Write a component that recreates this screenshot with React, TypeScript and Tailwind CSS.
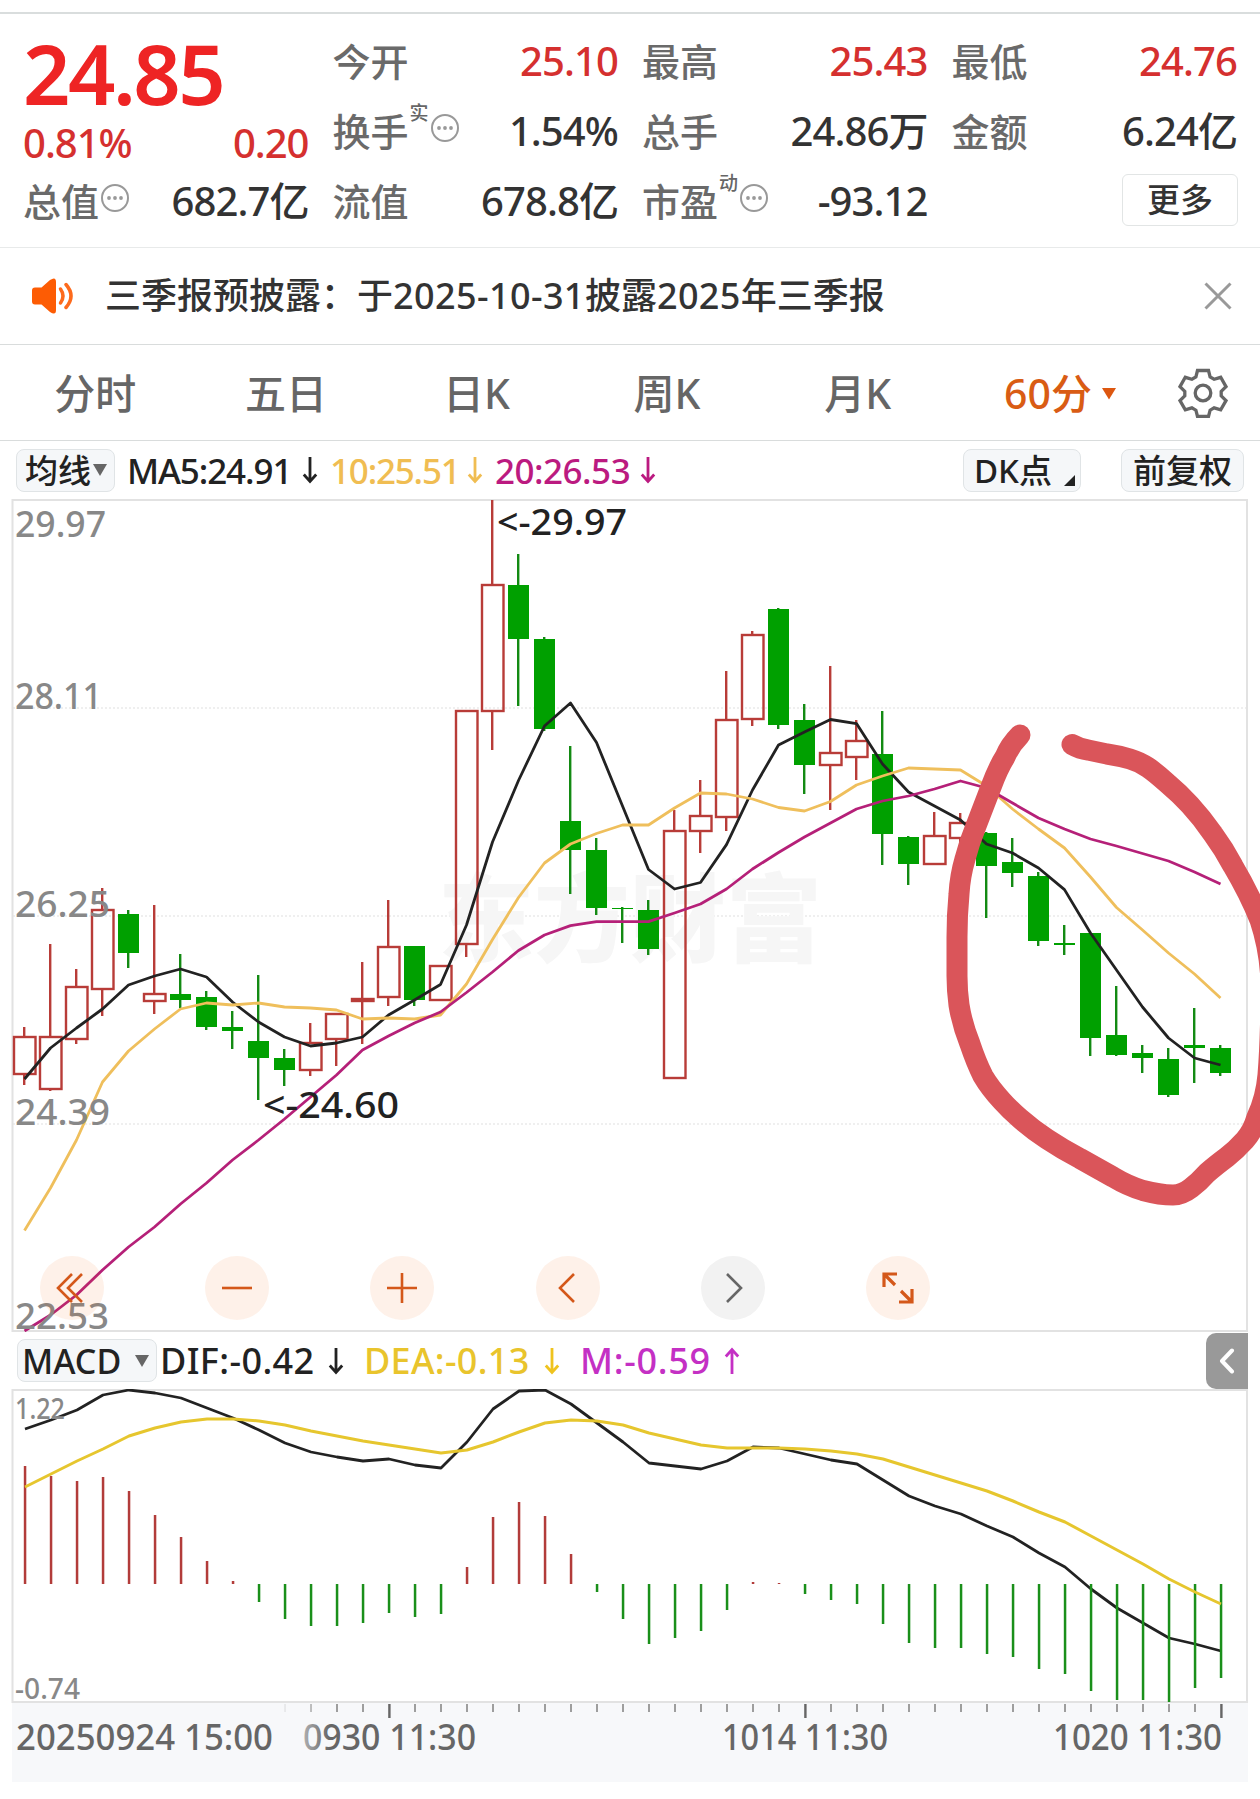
import type { ReactNode } from 'react';
import { clsx } from 'clsx';

const STEP = 26;

type Candle = ['r' | 'g', number, number, number, number];

// [colour, high, body top, body bottom, low]
const CANDLES: Candle[] = [
  ['r', 1027, 1037, 1074, 1085],
  ['r', 944, 1037, 1089, 1091],
  ['r', 969, 987, 1039, 1044],
  ['r', 888, 910, 989, 1016],
  ['g', 910, 914, 953, 968],
  ['r', 905, 994, 1001, 1014],
  ['g', 954, 994, 1000, 1008],
  ['g', 991, 997, 1027, 1030],
  ['g', 1011, 1027, 1031, 1049],
  ['g', 975, 1041, 1058, 1100],
  ['g', 1049, 1058, 1070, 1086],
  ['r', 1023, 1043, 1070, 1076],
  ['r', 1014, 1014, 1039, 1066],
  ['r', 962, 999, 1001, 1044],
  ['r', 900, 947, 997, 1006],
  ['g', 946, 946, 1000, 1006],
  ['r', 966, 966, 1000, 1000],
  ['r', 711, 711, 944, 957],
  ['r', 500, 585, 711, 750],
  ['g', 554, 585, 639, 706],
  ['g', 637, 639, 729, 731],
  ['g', 746, 821, 850, 894],
  ['g', 838, 850, 908, 915],
  ['g', 907, 908, 909, 943],
  ['g', 900, 910, 949, 955],
  ['r', 810, 831, 1078, 1078],
  ['r', 780, 816, 831, 853],
  ['r', 671, 720, 817, 831],
  ['r', 631, 635, 719, 726],
  ['g', 608, 609, 725, 729],
  ['g', 704, 720, 765, 794],
  ['r', 666, 753, 765, 810],
  ['r', 720, 741, 757, 780],
  ['g', 711, 754, 834, 865],
  ['g', 836, 837, 864, 885],
  ['r', 812, 836, 864, 864],
  ['r', 813, 823, 838, 845],
  ['g', 832, 833, 866, 918],
  ['g', 838, 862, 873, 887],
  ['g', 872, 876, 941, 946],
  ['g', 925, 943, 945, 955],
  ['g', 933, 933, 1038, 1056],
  ['g', 986, 1035, 1055, 1056],
  ['g', 1045, 1053, 1058, 1073],
  ['g', 1048, 1059, 1095, 1097],
  ['g', 1008, 1045, 1048, 1083],
  ['g', 1045, 1048, 1073, 1076],
];

const MA5 = [
  1079, 1048, 1028, 1009, 985, 976, 969, 977, 1002, 1022, 1037, 1046, 1043, 1037, 1015, 1000, 984.5, 925, 842, 780.5,
  726, 703, 742.5, 806, 869.5, 889, 882.5, 844.6, 790, 745, 732, 719.5, 723.6, 764, 792, 806, 820, 844, 853, 868, 889.6,
  933, 970, 1007, 1038, 1058, 1065,
];
const MA10 = [
  1230.6, 1188, 1140, 1082, 1051, 1029, 1009, 1003, 1005, 1003, 1007, 1008, 1010, 1019, 1018, 1019, 1015, 984, 939.5,
  897.5, 863, 844, 833.5, 825, 825, 808, 793, 794, 799, 807.5, 811, 801.5, 785, 776, 768, 769, 770, 786, 809, 829, 848,
  877, 907.5, 930, 953, 974, 998,
];
const MA20 = [
  1331, 1315, 1295, 1270, 1247, 1227, 1204, 1183, 1160, 1140, 1119, 1097, 1075, 1050, 1036, 1023, 1012, 992.5, 972,
  950.5, 935, 925.6, 921.7, 921.7, 921.7, 913, 904, 889, 869, 852.5, 837, 823, 809, 801, 796, 789, 781, 788, 803, 818,
  829, 839, 846, 853.5, 861, 872, 884,
];
const DIF = [
  1429, 1420, 1410, 1395, 1390, 1393, 1398, 1408, 1418, 1430, 1443, 1452, 1457, 1461, 1459, 1465, 1468, 1442, 1409,
  1391, 1390, 1404, 1423, 1442, 1463, 1466, 1469, 1461, 1447, 1448, 1454, 1460, 1464, 1480, 1496, 1506, 1514, 1526,
  1537, 1553, 1567, 1589, 1608, 1623, 1638, 1644, 1651,
];
const DEA = [
  1487, 1474, 1461, 1449, 1436, 1428, 1422, 1419, 1419, 1421, 1425, 1431, 1436, 1441, 1445, 1449, 1453, 1450, 1442,
  1432, 1423, 1420, 1421, 1425, 1433, 1439, 1445, 1448, 1448, 1448, 1449, 1451, 1454, 1459, 1467, 1475, 1483, 1491,
  1501, 1512, 1522, 1536, 1550, 1564, 1579, 1592, 1604,
];
const MACD = [
  1466, 1476, 1481, 1477, 1491, 1515, 1537, 1561, 1581, 1602, 1619, 1626, 1626, 1623, 1613, 1617, 1614, 1567, 1517,
  1502, 1516, 1554, 1592, 1619, 1644, 1638, 1631, 1610, 1582, 1583, 1594, 1600, 1604, 1624, 1643, 1648, 1648, 1654,
  1657, 1669, 1674, 1691, 1700, 1700, 1702, 1688, 1678,
];
const ZERO = 1584;

function toPoints(values: number[], start: number) {
  return values.map((y, i) => `${start + i * STEP},${y}`).join(' ');
}

function Label({
  x,
  y,
  w,
  size,
  fill,
  children,
}: {
  x: number;
  y: number;
  w: number;
  size: number;
  fill: string;
  children: string;
}) {
  return (
    <text x={x} y={y} fontSize={size} fill={fill} textLength={w} lengthAdjust="spacingAndGlyphs">
      {children}
    </text>
  );
}

function InfoIcon() {
  return (
    <svg width="30" height="30" viewBox="0 0 30 30" className="relative -top-[3px] left-px shrink-0">
      <circle cx="15" cy="15" r="13" fill="none" stroke="#999" strokeWidth="2" />
      <circle cx="9" cy="15" r="1.9" fill="#999" />
      <circle cx="15" cy="15" r="1.9" fill="#999" />
      <circle cx="21" cy="15" r="1.9" fill="#999" />
    </svg>
  );
}

function Stat({
  label,
  value,
  red,
  sup,
  info,
}: {
  label: string;
  value: string;
  red?: boolean;
  sup?: string;
  info?: boolean;
}) {
  return (
    <div className="flex h-[70px] items-center">
      <span className="text-[38px] text-[#6a6a6a]">{label}</span>
      {sup && <span className="relative -top-[18px] ml-px text-[19px] text-[#666]">{sup}</span>}
      {info && <InfoIcon />}
      <span className={clsx('ml-auto text-[40px] tracking-[-0.9px]', red ? 'text-[#d5302f]' : 'text-[#333]')}>
        {value}
      </span>
    </div>
  );
}

function Quote() {
  return (
    <section className="mt-3 h-[235px] border-t-2 border-[#d9dddd] px-[23px] pt-3">
      <div className="grid grid-cols-4 gap-x-6">
        <div>
          <div className="flex h-[90px] items-center pt-[3px] text-[83px] font-semibold tracking-[-2.5px] text-[#ee2424]">
            24.85
          </div>
          <div className="flex h-[50px] items-center justify-between pt-1 text-[40px] tracking-[-1px] text-[#d5302f]">
            <span>0.81%</span>
            <span>0.20</span>
          </div>
          <Stat label="总值" value="682.7亿" info />
        </div>
        <div>
          <Stat label="今开" value="25.10" red />
          <Stat label="换手" value="1.54%" sup="实" info />
          <Stat label="流值" value="678.8亿" />
        </div>
        <div>
          <Stat label="最高" value="25.43" red />
          <Stat label="总手" value="24.86万" />
          <Stat label="市盈" value="-93.12" sup="动" info />
        </div>
        <div>
          <Stat label="最低" value="24.76" red />
          <Stat label="金额" value="6.24亿" />
          <div className="flex h-[70px] items-center justify-end">
            <button className="relative -top-px -mr-px h-[52px] w-[116px] rounded-md border-[1.5px] border-[#e2e5e5] pb-[2px] text-[33px] leading-none text-[#333]">
              更多
            </button>
          </div>
        </div>
      </div>
    </section>
  );
}

function Notice() {
  return (
    <section className="flex h-[97px] items-center border-t border-[#e8eaea] px-[31px]">
      <svg width="42" height="36" viewBox="0 0 42 36">
        <path
          d="M4 9.500h6.500L19 2q6-4 6 2v28q0 6-6 2l-8.500-7.500H4q-3 0-3-3v-11q0-3 3-3z"
          fill="#fd5c04"
        />
        <path d="M29.500 11q5 7 0 14" fill="none" stroke="#fd6a1c" strokeWidth="3.500" strokeLinecap="round" />
        <path d="M35 6.500q10 11.500 0 23" fill="none" stroke="#fd6a1c" strokeWidth="3.500" strokeLinecap="round" />
      </svg>
      <span className="ml-8 text-[36px] text-[#333]">
        三季报预披露：于
        <span className="tracking-[0.4px]">2025-10-31</span>
        披露
        <span className="tracking-[0.4px]">2025</span>
        年三季报
      </span>
      <svg width="28" height="28" viewBox="0 0 28 28" className="-mr-[3px] ml-auto">
        <path d="M1.500 1.500l25 25M26.500 1.500l-25 25" stroke="#999" strokeWidth="3" />
      </svg>
    </section>
  );
}

const TABS = ['分时', '五日', '日K', '周K', '月K'];

function Tabs() {
  return (
    <nav className="flex h-[97px] items-center border-y-[1.5px] border-[#d9dcdc] text-[41px] text-[#666]">
      {TABS.map((tab) => (
        <span key={tab} className="w-[190.600px] pt-[2px] text-center">
          {tab}
        </span>
      ))}
      <span className="relative w-[190px] pt-[2px] text-center text-[#d95c14]">
        60分
        <svg width="16" height="12" viewBox="0 0 16 12" className="absolute top-[17px] right-[26px]">
          <path d="M1 0h14l-7 11.500z" fill="#dd5710" />
        </svg>
      </span>
      <svg width="50" height="50" viewBox="0 0 50 50" className="ml-[35px]">
        <path
          d="M19.500 2.500h11l1.600 6.500 4 2.300 6.600-2 5.300 9.300-4.800 4.800v4.400l4.800 4.800-5.300 9.200-6.600-2-4 2.400-1.600 6.300h-11l-1.600-6.300-4-2.400-6.600 2-5.300-9.200 4.800-4.800v-4.400L2 18.600l5.300-9.300 6.600 2 4-2.300z"
          fill="none"
          stroke="#666"
          strokeWidth="3.300"
        />
        <circle cx="25" cy="25" r="7.800" fill="none" stroke="#666" strokeWidth="3.300" />
      </svg>
    </nav>
  );
}

function Arrow({ up, className }: { up?: boolean; className: string }) {
  return (
    <svg width="16" height="28" viewBox="0 0 16 28" className={clsx('shrink-0', className, up && 'rotate-180')}>
      <path d="M8 1v24M1.800 18.500L8 25.500l6.200-7" fill="none" stroke="currentColor" strokeWidth="2.800" />
    </svg>
  );
}

function Chip({ className, children }: { className: string; children: ReactNode }) {
  return (
    <div
      className={clsx(
        'flex h-[43px] shrink-0 items-center rounded-lg border-[1.5px] border-[#e0e4e6] bg-[#f5f7f9] text-[33px] leading-none text-[#222]',
        className,
      )}
    >
      {children}
    </div>
  );
}

function MaBar() {
  return (
    <div className="flex h-[58px] items-center pl-4 text-[35px] whitespace-nowrap">
      <Chip className="w-[99px] pl-[8px]">
        均线
        <svg width="14" height="12" viewBox="0 0 14 12" className="ml-[2px]">
          <path d="M0 0h14L7 12z" fill="#666" />
        </svg>
      </Chip>
      <span className="ml-[12px] w-[175px] tracking-[-1.1px] text-[#222]">MA5:24.91</span>
      <Arrow className="text-[#222]" />
      <span className="ml-3 w-[137px] tracking-[-1.200px] text-[#f0bd52]">10:25.51</span>
      <Arrow className="text-[#f0bd52]" />
      <span className="ml-[12px] w-[145px] tracking-[-0.500px] text-[#bb1a80]">20:26.53</span>
      <Arrow className="text-[#bb1a80]" />
      <Chip className="relative ml-auto w-[118px] pl-[10px]">
        DK点
        <svg width="11" height="11" viewBox="0 0 11 11" className="absolute right-[5px] bottom-[5px]">
          <path d="M11 0v11H0z" fill="#222" />
        </svg>
      </Chip>
      <Chip className="mr-4 ml-[40px] w-[123px] justify-center">前复权</Chip>
    </div>
  );
}

function CandleShape({ x, candle }: { x: number; candle: Candle }) {
  const [kind, high, top, bottom, low] = candle;
  if (kind === 'g') {
    return (
      <g fill="#00a000">
        <rect x={x - 1} y={high} width="2.400" height={low - high} fill="#138a13" />
        <rect x={x - 10} y={top} width="21" height={bottom - top} />
      </g>
    );
  }
  return (
    <g fill="none" stroke="#b83c38" strokeWidth="2.400">
      <path d={`M${x + 0.2} ${high}V${top}M${x + 0.2} ${bottom}V${low}`} />
      <rect x={x - 10} y={top} width="21.500" height={bottom - top} />
    </g>
  );
}

function Control({ muted, d, wide }: { muted?: boolean; d: string; wide?: boolean }) {
  return (
    <button
      className={clsx(
        'flex size-16 items-center justify-center rounded-full',
        muted ? 'bg-[#f2f2f2] text-[#666]' : 'bg-[#f06010]/9 text-[#d4581a]',
      )}
    >
      <svg width="36" height="36" viewBox="-18 -18 36 36">
        <path d={d} fill="none" stroke="currentColor" strokeWidth={wide ? 3.2 : 2.6} />
      </svg>
    </button>
  );
}

function PriceChart() {
  return (
    <div className="relative h-[833px]">
      <svg width="1260" height="833" viewBox="0 499 1260 833" className="block">
        <g stroke="#e0e0e0" strokeWidth="1.200" strokeDasharray="2 2">
          <path d="M13 708H1246M13 916H1246M13 1124H1246" />
        </g>
        <text
          x="438"
          y="954"
          fontSize="96"
          fontWeight="900"
          fill="#f6f6f6"
          textLength="384"
          lengthAdjust="spacingAndGlyphs"
        >
          东方财富
        </text>
        <rect x="12.500" y="500" width="1234.500" height="831" fill="none" stroke="#e2e2e2" strokeWidth="2" />
        {CANDLES.map((candle, i) => (
          <CandleShape key={i} x={24 + i * STEP} candle={candle} />
        ))}
        <g fill="none" strokeWidth="2.800" strokeLinejoin="round">
          <polyline points={toPoints(MA5, 24.5)} stroke="#222" />
          <polyline points={toPoints(MA10, 24.5)} stroke="#efbf5c" />
          <polyline points={toPoints(MA20, 24.5)} stroke="#b52078" />
        </g>
        <Label x={15} y={537} w={91} size={37} fill="#888">29.97</Label>
        <Label x={15} y={709} w={87} size={37} fill="#888">28.11</Label>
        <Label x={15} y={917} w={95} size={37} fill="#888">26.25</Label>
        <Label x={15} y={1125} w={95} size={37} fill="#888">24.39</Label>
        <Label x={15} y={1329} w={94} size={37} fill="#888">22.53</Label>
        <Label x={497} y={535} w={130} size={37} fill="#222">{'<-29.97'}</Label>
        <Label x={263} y={1118} w={136} size={37} fill="#222">{'<-24.60'}</Label>
      </svg>
      <div className="absolute bottom-3 left-10 flex gap-[101.200px]">
        <Control d="M0 -14L-14 0L0 14M10 -14L-4 0L10 14" />
        <Control d="M-15 0H15" />
        <Control d="M-15 0H15M0 -15V15" />
        <Control d="M6 -14L-8 0L6 14" />
        <Control d="M-6 -14L8 0L-6 14" muted />
        <Control d="M-14 -1V-14H-1M-14 -14L-3 -3M14 1V14H1M14 14L3 3" wide />
      </div>
    </div>
  );
}

function MacdBar() {
  return (
    <div className="flex h-[57px] items-center pl-[17px] text-[36px] whitespace-nowrap">
      <Chip className="w-[140px] justify-between pr-[7px] pl-[4px]">
        <span className="text-[34px]">MACD</span>
        <svg width="14" height="12" viewBox="0 0 14 12">
          <path d="M0 0h14L7 12z" fill="#666" />
        </svg>
      </Chip>
      <span className="ml-[3px] w-[168px] tracking-[0.4px] text-[#222]">DIF:-0.42</span>
      <Arrow className="text-[#222]" />
      <span className="ml-5 w-[180px] tracking-[0.3px] text-[#e9c42c]">DEA:-0.13</span>
      <Arrow className="text-[#efc31e]" />
      <span className="ml-[20px] w-[144px] tracking-[0.700px] text-[#c430c4]">M:-0.59</span>
      <Arrow up className="text-[#c430c4]" />
      <button className="mr-3 ml-auto flex h-[56px] w-[42px] items-center justify-center rounded-l-[10px] bg-[#999]">
        <svg width="16" height="26" viewBox="0 0 16 26">
          <path
            d="M13 2.500L3 13l10 10.500"
            fill="none"
            stroke="#fff"
            strokeWidth="4"
            strokeLinecap="round"
            strokeLinejoin="round"
          />
        </svg>
      </button>
    </div>
  );
}

function MacdChart() {
  return (
    <svg width="1260" height="410" viewBox="0 1389 1260 410" className="block">
      <defs>
        <linearGradient id="fade" x1="0" x2="1" y1="0" y2="0">
          <stop offset="0" stopColor="#f7f8fa" />
          <stop offset="1" stopColor="#f7f8fa" stopOpacity="0" />
        </linearGradient>
      </defs>
      <rect x="12" y="1703" width="1236" height="79" fill="#f7f8fa" />
      <rect x="12.500" y="1390" width="1234.500" height="312" fill="none" stroke="#e2e2e2" strokeWidth="2" />
      <polyline points={toPoints(DIF, 25)} stroke="#222" fill="none" strokeWidth="2.800" strokeLinejoin="round" />
      {MACD.map((y, i) => (
        <rect
          key={i}
          x={23.8 + i * STEP}
          y={Math.min(y, ZERO)}
          width="2.500"
          height={Math.abs(ZERO - y)}
          fill={y < ZERO ? '#b23c3a' : '#1a8f1a'}
        />
      ))}
      <polyline points={toPoints(DEA, 25)} stroke="#e6c62e" fill="none" strokeWidth="3" strokeLinejoin="round" />
      {MACD.map((_, i) => {
        if (i < 10) return null;
        const major = i % 16 === 14;
        return (
          <rect
            key={i}
            x={24.2 + i * STEP}
            y="1704"
            width={major ? 2.4 : 1.6}
            height={major ? 14 : 8}
            fill={major ? '#666' : '#888'}
          />
        );
      })}
      <Label x={15} y={1419} w={50} size={28} fill="#888">1.22</Label>
      <Label x={15} y={1699} w={65} size={28} fill="#888">-0.74</Label>
      <Label x={16} y={1750} w={257} size={36} fill="#666">20250924 15:00</Label>
      <Label x={303} y={1750} w={173} size={36} fill="#666">0930 11:30</Label>
      <Label x={722} y={1750} w={166} size={36} fill="#666">1014 11:30</Label>
      <Label x={1053} y={1750} w={169} size={36} fill="#666">1020 11:30</Label>
      <rect x="276" y="1703" width="54" height="79" fill="url(#fade)" />
    </svg>
  );
}

// Freehand marker circle around the latest candles
function Marker() {
  return (
    <svg
      width="320"
      height="520"
      viewBox="940 700 320 520"
      className="pointer-events-none absolute top-[700px] left-[940px]"
    >
      <path
        d="M1020 735Q1010 745 1005 757Q998 768 991 787L976 826Q969 843 965 859Q960 876 959 894Q957 915 957 937V976Q957 990 959 1005Q962 1024 970 1044Q976 1062 983 1076Q990 1088 1002 1101Q1010 1110 1020 1118.500Q1032 1129 1047 1139Q1062 1149 1080 1158.500L1113 1177Q1128 1186 1143 1190.500Q1160 1195 1173 1195Q1182 1195 1191 1188Q1199 1182 1207 1173Q1215 1166 1227 1157Q1236 1150 1245 1140Q1253 1131 1257 1117Q1266 1098 1268 1075Q1271 1037 1271 983Q1270 950 1260 920Q1249 893 1233 866Q1224 849 1213 834Q1202 818 1190 805Q1180 794 1167 783Q1156 773 1148 767.500Q1140 762 1130 759Q1120 756 1107 754L1088 750Q1080 749 1072 744.500"
        fill="none"
        stroke="#da555a"
        strokeWidth="21"
        strokeLinecap="round"
        strokeLinejoin="round"
      />
    </svg>
  );
}

export default function App() {
  return (
    <div className="relative flex h-[1799px] w-[1260px] flex-col overflow-hidden bg-white font-['Noto_Sans','Noto_Sans_CJK_SC',sans-serif] leading-none font-medium">
      <Quote />
      <Notice />
      <Tabs />
      <MaBar />
      <PriceChart />
      <MacdBar />
      <MacdChart />
      <Marker />
    </div>
  );
}
